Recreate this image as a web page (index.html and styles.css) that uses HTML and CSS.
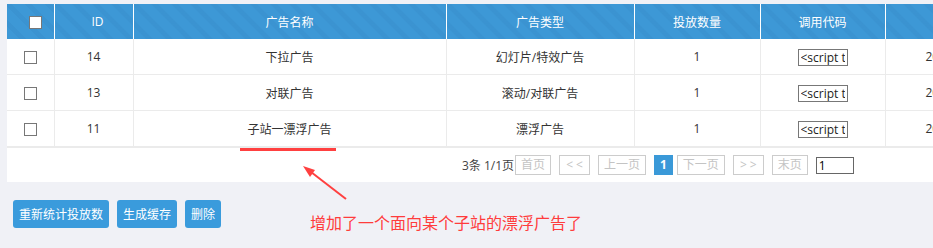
FILE: index.html
```html
<!DOCTYPE html>
<html lang="zh-CN">
<head>
    <meta charset="UTF-8">
    <title>广告管理</title>
    <link rel="stylesheet" href="styles.css">
</head>
<body>
    <div class="page">
        <div class="panel">
            <table class="list">
                <colgroup>
                    <col style="width: 47px">
                    <col style="width: 79px">
                    <col style="width: 313px">
                    <col style="width: 188px">
                    <col style="width: 126px">
                    <col style="width: 125px">
                    <col style="width: 122px">
                </colgroup>
                <thead>
                    <tr>
                        <th class="col-chk"><span class="chk chk-head"></span></th>
                        <th class="col-id">ID</th>
                        <th>广告名称</th>
                        <th>广告类型</th>
                        <th>投放数量</th>
                        <th>调用代码</th>
                        <th></th>
                    </tr>
                </thead>
                <tbody>
                    <tr>
                        <td><span class="chk"></span></td>
                        <td>14</td>
                        <td>下拉广告</td>
                        <td>幻灯片/特效广告</td>
                        <td>1</td>
                        <td><input class="code" type="text" value="<script type=&quot;text/javascript&quot;>" readonly></td>
                        <td class="date">2017-12-20 10:15</td>
                    </tr>
                    <tr>
                        <td><span class="chk"></span></td>
                        <td>13</td>
                        <td>对联广告</td>
                        <td>滚动/对联广告</td>
                        <td>1</td>
                        <td><input class="code" type="text" value="<script type=&quot;text/javascript&quot;>" readonly></td>
                        <td class="date">2017-12-20 10:12</td>
                    </tr>
                    <tr>
                        <td><span class="chk"></span></td>
                        <td>11</td>
                        <td>子站一漂浮广告</td>
                        <td>漂浮广告</td>
                        <td>1</td>
                        <td><input class="code" type="text" value="<script type=&quot;text/javascript&quot;>" readonly></td>
                        <td class="date">2017-12-19 16:40</td>
                    </tr>
                </tbody>
            </table>

            <div class="pager">
                <span class="pager-info">3条 1/1页</span>
                <a class="pg">首页</a>
                <a class="pg pg-arrow">&lt; &lt;</a>
                <a class="pg">上一页</a>
                <a class="pg pg-current">1</a>
                <a class="pg">下一页</a>
                <a class="pg pg-arrow">&gt; &gt;</a>
                <a class="pg">末页</a>
                <input class="pg-input" type="text" value="1">
            </div>
        </div>

        <div class="actions">
            <button class="btn">重新统计投放数</button>
            <button class="btn">生成缓存</button>
            <button class="btn">删除</button>
            <span class="note">增加了一个面向某个子站的漂浮广告了</span>
        </div>

        <!-- 标注：下划线和箭头 -->
        <svg class="marks" width="933" height="248" viewBox="0 0 933 248">
            <rect x="240" y="148" width="96" height="3" fill="#ff4040"/>
            <line x1="346" y1="199" x2="311" y2="172" stroke="#ff4040" stroke-width="2"/>
            <polygon points="303,166 315,170 310,177" fill="#ff4040"/>
        </svg>
    </div>
</body>
</html>
```

FILE: styles.css
```css
html, body {
    margin: 0;
    padding: 0;
    overflow: hidden;
}
body {
    font-family: "Open Sans", "Noto Sans CJK SC", sans-serif;
    font-size: 12px;
    color: #333;
    background-color: #f0f1f6;
}
.page {
    position: relative;
    width: 933px;
    height: 248px;
    padding: 4px 0 0 7px;
    box-sizing: border-box;
}
.panel {
    width: 1000px;
    background-color: #fff;
}
.list {
    width: 1000px;
    border-collapse: collapse;
    table-layout: fixed;
}
.list th {
    height: 35px;
    padding: 0;
    font-weight: normal;
    color: #fff;
    text-align: center;
    background-color: #3d98d6;
    background-image: repeating-linear-gradient(45deg, rgba(0,0,0,0) 0, rgba(0,0,0,0) 9px, rgba(30,90,150,0.08) 9px, rgba(30,90,150,0.08) 14px);
    border-right: 1px solid #fff;
}
.list th.col-chk {
    padding-left: 10px;
}
.list th.col-id {
    padding-left: 8px;
}
.list td {
    height: 35px;
    padding: 0;
    text-align: center;
    border-right: 1px solid #ebebeb;
    border-bottom: 1px solid #ebebeb;
    white-space: nowrap;
    overflow: hidden;
}
.list td.date {
    padding-left: 40px;
    text-align: left;
}
.chk {
    display: inline-block;
    width: 11px;
    height: 11px;
    border: 1px solid #777;
    background-color: #fff;
    vertical-align: middle;
}
.code {
    width: 50px;
    height: 17px;
    box-sizing: border-box;
    padding: 0 2px;
    border: 1px solid #777;
    font-family: "Open Sans", sans-serif;
    font-size: 12px;
    color: #222;
    vertical-align: middle;
}
.pager {
    display: flex;
    align-items: center;
    height: 34px;
    padding-left: 455px;
    border-top: 1px solid #ebebeb;
}
.pager-info {
    margin-right: 1px;
    color: #444;
}
.pg {
    display: inline-block;
    height: 20px;
    line-height: 18px;
    box-sizing: border-box;
    padding: 0 5px;
    margin-right: 8px;
    border: 1px solid #ccc;
    color: #c4c4c4;
}
.pg-arrow {
    padding: 0 6px;
}
.pg-current {
    padding: 0 5px;
    margin-right: 4px;
    background-color: #3a99d8;
    border-color: #3a99d8;
    color: #fff;
    font-weight: bold;
}
.pg-input {
    width: 38px;
    height: 17px;
    box-sizing: border-box;
    padding: 0 2px;
    border: 1px solid #666;
    font-family: "Open Sans", sans-serif;
    font-size: 12px;
}
.actions {
    display: flex;
    align-items: flex-start;
    gap: 8px;
    margin-top: 18px;
    margin-left: 6px;
}
.btn {
    height: 28px;
    padding: 0 6px;
    border: none;
    border-radius: 3px;
    background-color: #3a9bdc;
    color: #fff;
    font-family: "Open Sans", "Noto Sans CJK SC", sans-serif;
    font-size: 12px;
    cursor: pointer;
}
.note {
    margin-left: 81px;
    margin-top: 13px;
    line-height: 20px;
    font-size: 16px;
    color: #ff3c3c;
}
.marks {
    position: absolute;
    left: 0;
    top: 0;
    pointer-events: none;
}
```
